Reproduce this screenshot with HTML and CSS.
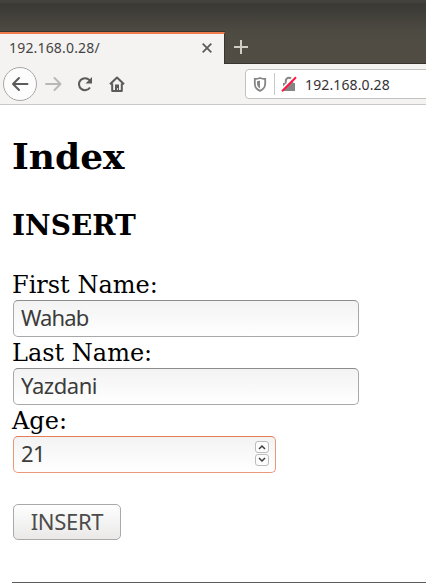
FILE: index.html
```html
<!DOCTYPE html>
<html lang="en">
<head>
<meta charset="utf-8">
<title>192.168.0.28/</title>
<link rel="stylesheet" href="styles.css">
</head>
<body>
<header class="tabs">
  <div class="tab">
    <span class="tab-title">192.168.0.28/</span>
    <svg class="close" width="12" height="12" viewBox="0 0 12 12"><path d="M1.700 1.700l8.600 8.600M10.300 1.700l-8.600 8.600"/></svg>
  </div>
  <svg class="plus" width="14" height="14" viewBox="0 0 14 14"><path d="M7 0v14M0 7h14"/></svg>
</header>
<nav class="toolbar">
  <span class="back"><svg width="18" height="16" viewBox="0 0 18 16"><path d="M16.500 8H2M8 2L2 8l6 6"/></svg></span>
  <svg class="forward" width="18" height="16" viewBox="0 0 18 16"><path d="M1 8h14.500M9.500 2l6 6-6 6"/></svg>
  <svg class="reload" width="16" height="16" viewBox="0 0 16 16"><path d="M13 11.500A6 6 0 1 1 12.500 4.200"/><path class="fill" d="M15 1v6.500H8.500z"/></svg>
  <svg class="home" width="16" height="16" viewBox="0 0 16 16"><path d="M1 8.300L8 1.500l7 6.800M3.200 7.500V15h9.600V7.500"/><path class="fill" d="M6 8.500h4V14H8.800v-2H8v2H6z"/></svg>
  <div class="urlbar">
    <svg width="14" height="15" viewBox="0 0 14 15"><path class="shield" d="M7 1c2 .8 3.600 1 5.200 1v4.500c0 3.500-2 6-5.200 7.300C3.800 12.500 1.800 10 1.800 6.500V2C3.400 2 5 1.800 7 1z"/><path class="shield-half" d="M7 3.500v8C5 10.200 4 8.500 4 6.500V4.200c1 0 2-.2 3-.7z"/></svg>
    <span class="divider"></span>
    <svg width="16" height="16" viewBox="0 0 16 16"><path class="shackle" d="M4.800 7.500V5a3.200 3.200 0 0 1 6.400 0v2.500"/><path class="lock" d="M2 7h12v8H2z"/><path class="gap" d="M0 14L14 0"/><path class="slash" d="M1 15.200L15 1.200"/></svg>
    <span class="address">192.168.0.28</span>
  </div>
</nav>
<main>
  <h2>Index</h2>
  <h3>INSERT</h3>
  <form>
    <label for="first">First Name:</label>
    <input id="first" type="text" value="Wahab">
    <label for="last">Last Name:</label>
    <input id="last" type="text" value="Yazdani">
    <label for="age">Age:</label>
    <div class="number">
      <input id="age" type="text" value="21">
      <div class="spinner">
        <span><svg width="8" height="6" viewBox="0 0 8 6"><path d="M1 5l3-3 3 3"/></svg></span>
        <span><svg width="8" height="6" viewBox="0 0 8 6"><path d="M1 1l3 3 3-3"/></svg></span>
      </div>
    </div>
    <button type="button">INSERT</button>
  </form>
  <hr>
</main>
</body>
</html>
```
FILE: styles.css
```css
* { box-sizing: border-box; }
html { overflow: hidden; }
body { margin: 0; height: 583px; overflow: hidden; background: #fff; color: #000; font-family: "DejaVu Serif", serif; }
svg { display: block; flex: none; fill: none; stroke: #5c5b59; stroke-width: 2; }

.tabs { display: flex; align-items: flex-end; height: 64px; border-bottom: 1px solid #37352f; background: linear-gradient(#43423d 0, #43423d 2px, #3a3934 4px, #4e4b43 33px, #514d45 63px); }
.tab { display: flex; align-items: center; justify-content: space-between; width: 225px; height: 32px; margin-bottom: -1px; padding: 0 11px 2px 9px; border-top: 2px solid #ef7b4c; border-right: 1px solid #37352f; background: #f4f3f2; box-shadow: 0 -1px #37352f; }
.tab-title { font: 14px/20px "Noto Sans", sans-serif; color: #444; letter-spacing: .18px; }
.close { stroke-width: 1.8; }
.plus { margin: 0 0 9px 9px; stroke: #d0cdc5; }

.toolbar { display: flex; align-items: center; height: 41px; border-bottom: 1px solid #cbc9c7; background: #f4f3f2; }
.back { display: flex; align-items: center; justify-content: center; flex: none; width: 34px; height: 34px; margin-left: 3px; border: 1px solid #aaa8a6; border-radius: 50%; background: #fcfcfc; }
.back svg, .forward { stroke-linecap: round; stroke-linejoin: round; }
.forward { margin-left: 8px; stroke: #b9b8b6; }
.reload { margin-left: 14px; }
.home { margin-left: 16px; stroke-linejoin: round; }
.fill { fill: #5c5b59; stroke: none; }
.urlbar { display: flex; align-items: center; flex: none; width: 200px; height: 30px; margin-left: 120px; padding-left: 7px; border: 1px solid #c3c1bf; border-radius: 4px; background: #fff; }
.shield { stroke: #858585; stroke-width: 1.8; }
.shield-half { fill: #858585; stroke: none; }
.divider { width: 1px; height: 22px; margin: 0 6px 0 7px; background: #c8c8c8; }
.shackle { stroke: #858585; }
.lock { fill: #858585; stroke: none; }
.gap { stroke: #fff; }
.slash { stroke: #ff1744; }
.address { margin-left: 8px; padding-top: 1px; font: 14px/20px "Noto Sans", sans-serif; color: #333; letter-spacing: .12px; }

main { padding: 30px 0 0 12px; }
h2 { margin: 0; font-size: 36px; line-height: 42px; }
h3 { margin: 32px 0 27px; font-size: 28px; line-height: 33px; }
label { display: block; height: 31px; font-size: 24px; line-height: 33px; }
input { display: block; width: 346px; height: 37px; margin: 0 0 0 1px; padding: 0 7px 3px; border: 1px solid #a8a8a8; border-top-color: #8c8c8c; border-radius: 5px; outline: 0; background: linear-gradient(#f3f3f3, #fff); color: #3c3c3c; font: 22px "Noto Sans", sans-serif; letter-spacing: -.6px; }
#first { letter-spacing: -.9px; }
#last { letter-spacing: -.45px; }
.number { position: relative; width: 264px; }
.number input { width: 263px; border-color: #eb987a; border-top-color: #e57c54; }
.spinner { position: absolute; top: 5px; right: 7px; display: grid; gap: 1px; }
.spinner span { display: flex; align-items: center; justify-content: center; width: 14px; height: 12px; border: 1px solid #bcbcbc; border-radius: 3px; background: #fcfcfc; }
.spinner svg { stroke: #3c3c3c; stroke-width: 1.5; }
button { display: block; width: 108px; height: 36px; margin: 31px 0 0 1px; padding: 0 0 3px; border: 1px solid #a9a9a9; border-radius: 5px; background: linear-gradient(#fefefe, #eae9e8); color: #4c4c4c; font: 22px "Noto Sans", sans-serif; letter-spacing: -.3px; }
hr { height: 1px; margin: 42px 0 0; border: 0; background: #5b5b5b; }
```
